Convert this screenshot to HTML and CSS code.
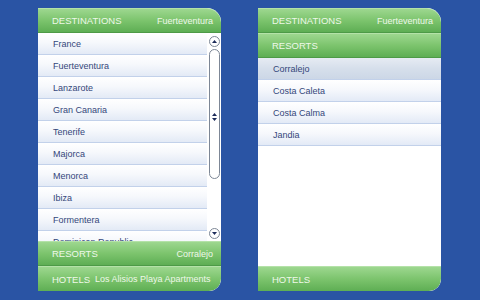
FILE: index.html
```html
<!DOCTYPE html>
<html lang="en">
<head>
    <meta charset="UTF-8">
    <title>Destinations</title>
    <link rel="stylesheet" href="styles.css">
</head>
<body>
    <div class="screens">
        <div class="panel">
            <div class="bar top">
                <span class="bar-title">DESTINATIONS</span>
                <span class="bar-value">Fuerteventura</span>
            </div>
            <div class="list-wrap">
                <ul class="list">
                    <li>France</li>
                    <li>Fuerteventura</li>
                    <li>Lanzarote</li>
                    <li>Gran Canaria</li>
                    <li>Tenerife</li>
                    <li>Majorca</li>
                    <li>Menorca</li>
                    <li>Ibiza</li>
                    <li>Formentera</li>
                    <li>Dominican Republic</li>
                </ul>
                <div class="scrollbar">
                    <div class="scroll-btn">
                        <svg width="5" height="3" viewBox="0 0 5 3"><path d="M0 3 L2.5 0 L5 3 Z" fill="#1d2c5a"/></svg>
                    </div>
                    <div class="thumb">
                        <svg width="5" height="8" viewBox="0 0 5 8"><path d="M0 3 L2.5 0 L5 3 Z M0 5 L2.5 8 L5 5 Z" fill="#1d2c5a"/></svg>
                    </div>
                    <div class="scroll-btn down">
                        <svg width="5" height="3" viewBox="0 0 5 3"><path d="M0 0 L2.5 3 L5 0 Z" fill="#1d2c5a"/></svg>
                    </div>
                </div>
            </div>
            <div class="bar">
                <span class="bar-title">RESORTS</span>
                <span class="bar-value">Corralejo</span>
            </div>
            <div class="bar bottom">
                <span class="bar-title">HOTELS</span>
                <span class="bar-value left">Los Alisios Playa Apartments</span>
            </div>
        </div>

        <div class="panel">
            <div class="bar top">
                <span class="bar-title">DESTINATIONS</span>
                <span class="bar-value">Fuerteventura</span>
            </div>
            <div class="bar">
                <span class="bar-title">RESORTS</span>
            </div>
            <div class="list-wrap">
                <ul class="list">
                    <li class="selected">Corralejo</li>
                    <li>Costa Caleta</li>
                    <li>Costa Calma</li>
                    <li>Jandia</li>
                </ul>
            </div>
            <div class="bar bottom">
                <span class="bar-title">HOTELS</span>
            </div>
        </div>
    </div>
</body>
</html>
```

FILE: styles.css
```css
body {
    margin: 0;
    background-color: #2a54a4;
    font-family: "Liberation Sans", Arial, sans-serif;
}
.screens {
    display: flex;
    gap: 37px;
    padding: 8px 0 0 38px;
}
.panel {
    width: 183px;
    height: 283px;
    display: flex;
    flex-direction: column;
    background-color: #fff;
    border-top-right-radius: 14px;
    border-bottom-right-radius: 12px;
    overflow: hidden;
}
.bar {
    height: 25px;
    flex: none;
    box-sizing: border-box;
    display: flex;
    align-items: center;
    justify-content: space-between;
    padding: 0 8px 0 14px;
    background: linear-gradient(#9dd78f, #7cc46d 50%, #5eae54);
    border-top: 1px solid #b4e2a8;
    border-bottom: 1px solid #4d9a47;
    color: #eef8e9;
}
.bar.top {
    border-top-right-radius: 14px;
}
.bar.bottom {
    border-bottom: none;
    border-bottom-right-radius: 12px;
}
.bar-title {
    font-size: 9.5px;
}
.bar-value {
    font-size: 9px;
}
.bar-value.left {
    flex: 1;
    margin-left: 5px;
}
.list-wrap {
    flex: 1;
    display: flex;
    overflow: hidden;
}
.list {
    flex: 1;
    list-style: none;
    margin: 0;
    padding: 0;
}
.list li {
    height: 22px;
    box-sizing: border-box;
    display: flex;
    align-items: center;
    padding-left: 15px;
    font-size: 9px;
    color: #34467a;
    background: linear-gradient(#ffffff, #f6f8fc 45%, #e3eaf6);
    border-bottom: 1px solid #c2d1ea;
}
.list li.selected {
    background: linear-gradient(#e6ebf3, #d6dfeb 50%, #ccd7e6);
}
.scrollbar {
    width: 14px;
    flex: none;
    display: flex;
    flex-direction: column;
    align-items: center;
    padding: 3px 0 2px;
}
.scroll-btn {
    width: 11px;
    height: 11px;
    box-sizing: border-box;
    border: 1px solid #7d8796;
    border-radius: 50%;
    background: #fff;
    display: flex;
    align-items: center;
    justify-content: center;
}
.thumb {
    width: 11px;
    height: 130px;
    margin-top: 2px;
    box-sizing: border-box;
    border: 1px solid #7d8796;
    border-radius: 6px;
    background: #fff;
    display: flex;
    align-items: center;
    justify-content: center;
    padding-top: 6px;
}
.scroll-btn.down {
    margin-top: auto;
}
```
